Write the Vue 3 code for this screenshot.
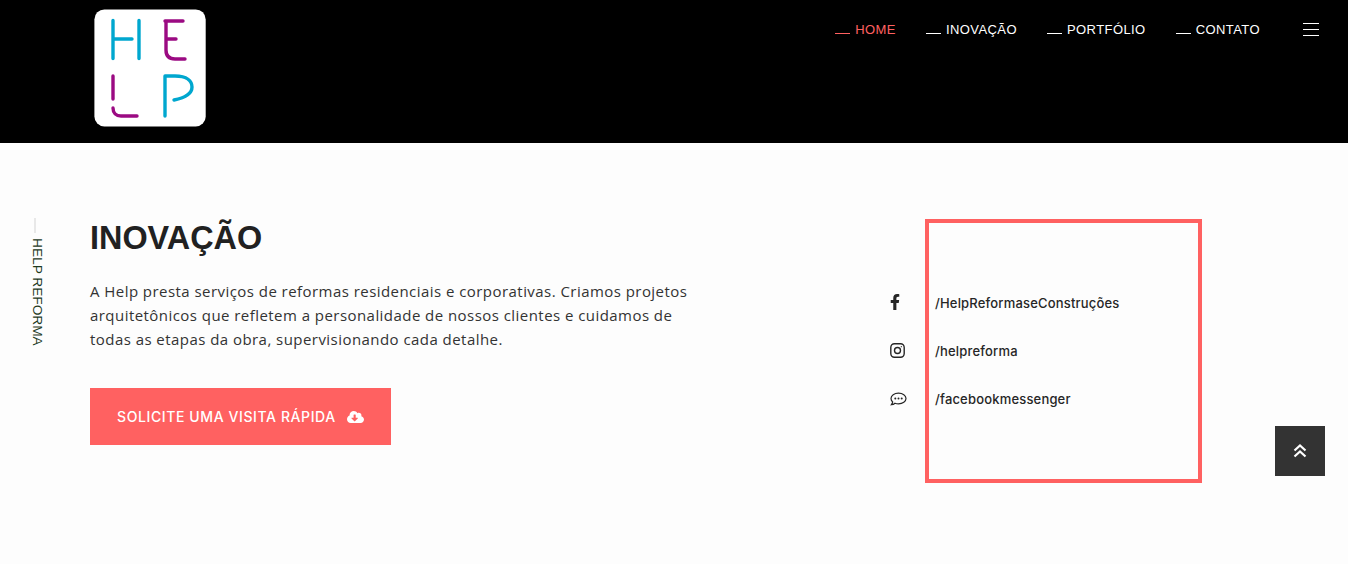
<script setup>
const links = [
  { label: 'HOME', active: true },
  { label: 'INOVAÇÃO' },
  { label: 'PORTFÓLIO' },
  { label: 'CONTATO' }
]
const socials = [
  { id: 'f', text: '/HelpReformaseConstruções' },
  { id: 'i', text: '/helpreforma' },
  { id: 'm', text: '/facebookmessenger' }
]
</script>

<template>
  <div class="page">
    <header class="top">
      <div class="logo">
        <svg width="112" height="118" viewBox="94 9 112 118" fill="none" stroke-width="3.4" stroke-linecap="round">
          <rect x="94.400" y="9.400" width="111.300" height="117" rx="10" fill="#fff" />
          <g stroke="#00a7cf">
            <path d="M113 20.500V58.500M139 20.500V58.500M113 39H132" />
            <path d="M165 76V116M165 76H175C187 76 192 81 192 87C192 94 184 98 174 100" />
          </g>
          <g stroke="#9b0a82">
            <path d="M165 21H183M166 21V50C166 56 169 59 175 59H185M166 39H176" />
            <path d="M113 76V99M113 108C113 113 116 116 121 116H137" />
          </g>
        </svg>
      </div>
      <nav class="nav">
        <a v-for="l in links" :key="l.label" class="link" :class="{ active: l.active }">
          <span class="dash"></span>{{ l.label }}
        </a>
        <span class="burger"><i></i><i></i><i></i></span>
      </nav>
    </header>

    <main class="main">
      <aside class="side">
        <span class="side-line"></span>
        <span class="side-text">HELP REFORMA</span>
      </aside>
      <section class="intro">
        <h1>INOVAÇÃO</h1>
        <p>A Help presta serviços de reformas residenciais e corporativas. Criamos projetos arquitetônicos que refletem a personalidade de nossos clientes e cuidamos de todas as etapas da obra, supervisionando cada detalhe.</p>
        <a class="cta">
          SOLICITE UMA VISITA RÁPIDA
          <svg width="17" height="14" viewBox="0 0 640 512" fill="#fff"><path d="M537.600 226.600c4.100-10.700 6.400-22.400 6.400-34.600 0-53-43-96-96-96-19.700 0-38.100 6-53.300 16.200C367 64.200 315.300 32 256 32c-88.400 0-160 71.600-160 160 0 2.700.1 5.400.2 8.100C40.200 219.800 0 273.200 0 336c0 79.500 64.500 144 144 144h368c70.700 0 128-57.300 128-128 0-61.900-44-113.600-102.400-125.400zm-132.900 88.700L299.300 420.700c-6.200 6.200-16.400 6.200-22.600 0L171.300 315.300c-10.100-10.100-2.900-27.300 11.300-27.300H248V176c0-8.800 7.200-16 16-16h48c8.800 0 16 7.200 16 16v112h65.400c14.200 0 21.400 17.200 11.300 27.300z"/></svg>
        </a>
      </section>
      <section class="social">
        <div class="icons">
          <span class="ic">
            <svg width="10" height="16" viewBox="0 0 320 512" fill="#262626"><path d="M279.140 288l14.220-92.660h-88.910v-60.130c0-25.350 12.420-50.060 52.240-50.060h40.420V6.260S260.430 0 225.360 0c-73.220 0-121.080 44.380-121.080 124.720v70.620H22.890V288h81.390v224h100.170V288z"/></svg>
          </span>
          <span class="ic">
            <svg width="15" height="15" viewBox="0 0 15 15" fill="none" stroke="#262626" stroke-width="1.400"><rect x=".8" y=".8" width="13.400" height="13.400" rx="3.600" /><circle cx="7.500" cy="7.500" r="3" /><circle cx="11.300" cy="3.700" r=".6" fill="#262626" stroke="none" /></svg>
          </span>
          <span class="ic">
            <svg width="17" height="15" viewBox="0 0 17 15" fill="none" stroke="#262626" stroke-width="1.200"><path d="M8.500 1.200C4.300 1.200 1 3.500 1 6.500c0 1.300.6 2.500 1.700 3.400-.2 1.100-.8 2.100-1.300 2.800 1.400-.1 2.700-.7 3.600-1.500 1.100.4 2.200.6 3.500.6 4.200 0 7.500-2.400 7.500-5.300S12.700 1.200 8.500 1.200z" /><g fill="#262626" stroke="none"><circle cx="5.300" cy="6.500" r="1" /><circle cx="8.500" cy="6.500" r="1" /><circle cx="11.700" cy="6.500" r="1" /></g></svg>
          </span>
        </div>
        <div class="box">
          <span v-for="s in socials" :key="s.id" class="handle">{{ s.text }}</span>
        </div>
      </section>
    </main>

    <a class="totop">
      <svg width="14" height="14" viewBox="0 0 14 14" fill="none" stroke="#fff" stroke-width="2.200"><path d="M1.500 6.500L7 1.500L12.500 6.500M1.500 12.500L7 7.500L12.500 12.500" /></svg>
    </a>
  </div>
</template>

<style>
html, body { margin: 0; background: #fdfdfd; overflow: hidden; }
</style>

<style scoped>
.page {
  position: relative;
  width: 1348px;
  height: 564px;
  background: #fdfdfd;
  font-family: "Inter", "Liberation Sans", sans-serif;
  color: #262626;
}
.top {
  height: 143px;
  background: #000;
  display: flex;
  justify-content: space-between;
  align-items: flex-start;
  padding: 9px 29px 0 94px;
  box-sizing: border-box;
}
.logo svg { display: block; }
.nav {
  display: flex;
  align-items: center;
  height: 40px;
  font-family: "Liberation Sans", sans-serif;
  font-size: 13px;
  letter-spacing: .42px;
  color: #fff;
}
.link {
  display: flex;
  align-items: center;
  margin-right: 30px;
  padding-top: 2px;
  line-height: 38px;
}
.active { color: #ff6161; }
.dash {
  width: 15px;
  height: 1px;
  margin: 7px 5px 0 0;
  background: currentColor;
}
.burger {
  display: flex;
  flex-direction: column;
  gap: 5px;
  width: 16px;
  margin-left: 13px;
}
.burger i {
  display: block;
  height: 1px;
  background: #fff;
}
.main {
  display: flex;
  align-items: flex-start;
  padding-top: 76px;
}
.side {
  width: 90px;
  display: flex;
  flex-direction: column;
  align-items: flex-start;
  padding-left: 30px;
  box-sizing: border-box;
}
.side-line {
  width: 2px;
  height: 15px;
  margin: -1px 0 0 4px;
  background: #e8e8e8;
}
.side-text {
  writing-mode: vertical-rl;
  margin-top: 5px;
  font-family: "Liberation Sans", sans-serif;
  font-size: 13.700px;
  line-height: 14px;
  color: #1d3a1d;
}
.intro { width: 610px; }
h1 {
  margin: 0;
  font-family: "Liberation Sans", sans-serif;
  font-size: 32.400px;
  line-height: 38px;
  font-weight: 700;
  color: #212121;
}
p {
  margin: 22px 0 0;
  width: 600px;
  font-family: "Open Sans", sans-serif;
  font-size: 15px;
  line-height: 24px;
  letter-spacing: .45px;
  color: #333;
}
.cta {
  display: inline-flex;
  align-items: center;
  gap: 11px;
  height: 57px;
  width: 301px;
  box-sizing: border-box;
  margin-top: 37px;
  padding-left: 27px;
  background: #ff6161;
  color: #fff;
  font-size: 14px;
  font-weight: 500;
  letter-spacing: .6px;
}
.social {
  display: flex;
  align-items: flex-start;
  margin-left: 189px;
}
.icons {
  width: 36px;
  display: flex;
  flex-direction: column;
  margin-top: 75px;
}
.ic {
  height: 48px;
  display: flex;
  align-items: flex-start;
}
.ic svg { display: block; margin-left: 1px; }
.ic:nth-child(2) svg { margin-top: 1px; }
.ic:nth-child(3) svg { margin-top: 2px; }
.box {
  width: 277px;
  height: 264px;
  box-sizing: border-box;
  border: 4px solid #ff6161;
  padding: 56px 0 0 6px;
  display: flex;
  flex-direction: column;
}
.handle {
  height: 48px;
  line-height: 48px;
  font-size: 13px;
  font-weight: 500;
  letter-spacing: .18px;
  color: #262626;
}
.totop {
  position: absolute;
  left: 1275px;
  top: 426px;
  width: 50px;
  height: 50px;
  background: #333;
  display: flex;
  align-items: center;
  justify-content: center;
}
</style>
